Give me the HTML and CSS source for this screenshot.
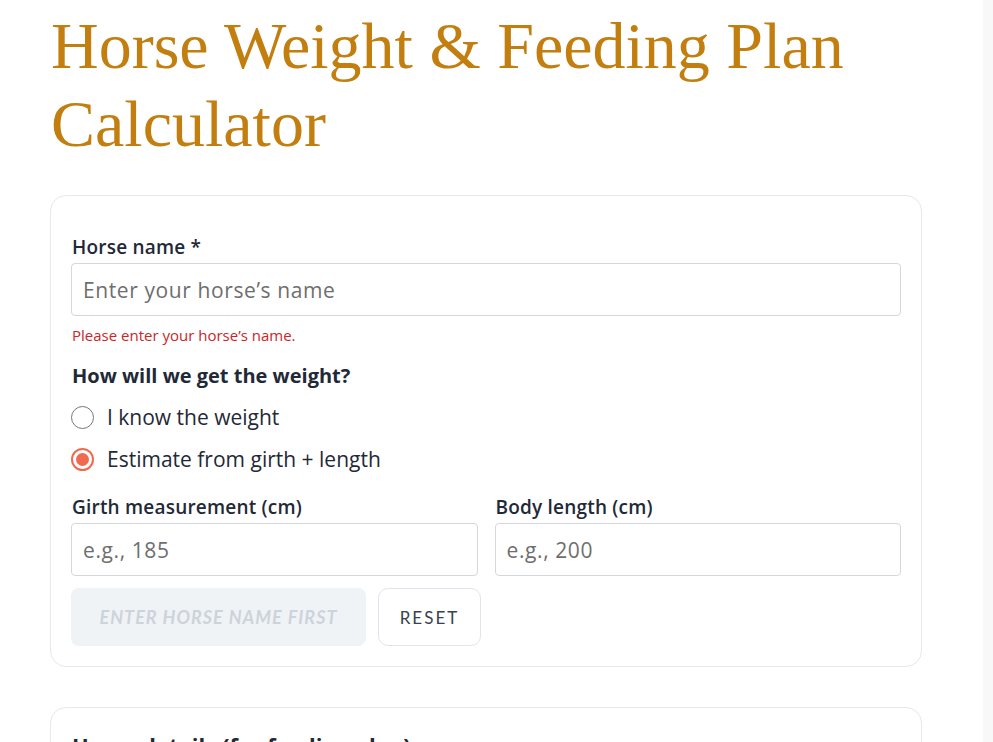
FILE: index.html
```html
<!DOCTYPE html>
<html lang="en">
<head>
<meta charset="utf-8">
<title>Horse Weight &amp; Feeding Plan Calculator</title>
<link rel="stylesheet" href="styles.css">
</head>
<body>
<main class="page">
  <h1 class="title">Horse Weight &amp; Feeding Plan Calculator</h1>

  <section class="card">
    <label class="label" for="name">Horse name *</label>
    <input class="input" id="name" type="text" placeholder="Enter your horse’s name">
    <p class="error">Please enter your horse’s name.</p>

    <h2 class="question">How will we get the weight?</h2>
    <div class="radios">
      <label class="radio">
        <span class="dot"></span>
        <span class="radio-text">I know the weight</span>
      </label>
      <label class="radio checked">
        <span class="dot"></span>
        <span class="radio-text">Estimate from girth + length</span>
      </label>
    </div>

    <div class="row">
      <div class="field">
        <label class="label" for="girth">Girth measurement (cm)</label>
        <input class="input" id="girth" type="text" placeholder="e.g., 185">
      </div>
      <div class="field">
        <label class="label" for="length">Body length (cm)</label>
        <input class="input" id="length" type="text" placeholder="e.g., 200">
      </div>
    </div>

    <div class="actions">
      <button class="btn-primary" disabled>Enter horse name first</button>
      <button class="btn-reset">Reset</button>
    </div>
  </section>

  <section class="card card-second">
    <h2 class="card-heading">Horse details (for feeding plan)</h2>
    <label class="label" for="age">Age (years)</label>
    <input class="input" id="age" type="text" placeholder="e.g., 12">
  </section>
</main>
</body>
</html>
```

FILE: styles.css
```css
* {
  box-sizing: border-box;
}

html {
  margin: 0;
  padding: 0;
  background: #f8f8f8;
}

body {
  margin: 0;
  padding: 0;
  width: 983px;
  min-height: 100vh;
  background: #ffffff;
  font-family: "Open Sans", "Lato", sans-serif;
  color: #1f2937;
}

.page {
  width: 872px;
  margin-left: 50px;
  padding-top: 7px;
  padding-bottom: 60px;
}

.title {
  margin: 0 0 32px 1px;
  font-family: "Liberation Serif", serif;
  font-weight: 400;
  font-size: 66px;
  line-height: 78px;
  color: #c27f0f;
}

.card {
  border: 1px solid #e6e8eb;
  border-radius: 16px;
  padding: 39px 20px 20px 20px;
  background: #fff;
}

.card-second {
  margin-top: 40px;
  padding-top: 23px;
}

.label {
  display: block;
  font-size: 19px;
  line-height: 24px;
  font-weight: 600;
  letter-spacing: 0.2px;
  color: #1f2937;
  margin-bottom: 4px;
  margin-left: 1px;
}

.input {
  display: block;
  width: 100%;
  height: 53px;
  border: 1px solid #d4d7db;
  border-radius: 4px;
  padding: 0 11px;
  font-family: "Open Sans", sans-serif;
  font-size: 21px;
  letter-spacing: 0.6px;
  color: #1f2937;
  background: #fff;
  outline: none;
}

.input::placeholder {
  color: #6e6e6e;
}

.error {
  margin: 9px 0 0 1px;
  font-size: 15px;
  line-height: 20px;
  color: #c8262b;
}

.question {
  margin: 19px 0 0 1px;
  font-size: 20px;
  line-height: 24px;
  font-weight: 700;
  color: #1f2937;
}

.radios {
  display: flex;
  flex-direction: column;
  gap: 18px;
  margin-top: 17px;
}

.radio {
  display: flex;
  align-items: center;
  gap: 13px;
  font-size: 21px;
  line-height: 24px;
  font-weight: 500;
  color: #1f2937;
}

.dot {
  width: 23px;
  height: 23px;
  border-radius: 50%;
  border: 1.5px solid #767676;
  flex: none;
  display: flex;
  align-items: center;
  justify-content: center;
}

.radio.checked .dot {
  border: 2px solid #ef6a4f;
}

.radio.checked .dot::after {
  content: "";
  width: 13px;
  height: 13px;
  border-radius: 50%;
  background: #ef6a4f;
}

.row {
  display: grid;
  grid-template-columns: 1fr 1fr;
  gap: 17px;
  margin-top: 24px;
}

.actions {
  display: flex;
  gap: 12px;
  margin-top: 12px;
}

.btn-primary {
  width: 295px;
  height: 58px;
  border: none;
  border-radius: 8px;
  background: #eff3f6;
  color: #cdd3da;
  font-family: "Lato", sans-serif;
  font-style: italic;
  font-weight: 700;
  font-size: 18px;
  letter-spacing: 1px;
  text-transform: uppercase;
}

.btn-reset {
  width: 103px;
  height: 58px;
  border: 1.5px solid #dfe5ec;
  border-radius: 10px;
  background: #fff;
  color: #374151;
  font-family: "Lato", sans-serif;
  font-size: 17px;
  letter-spacing: 2px;
  text-transform: uppercase;
}

.card-heading {
  margin: 0 0 20px 1px;
  font-size: 22px;
  line-height: 28px;
  font-weight: 700;
  color: #1f2937;
}
```
